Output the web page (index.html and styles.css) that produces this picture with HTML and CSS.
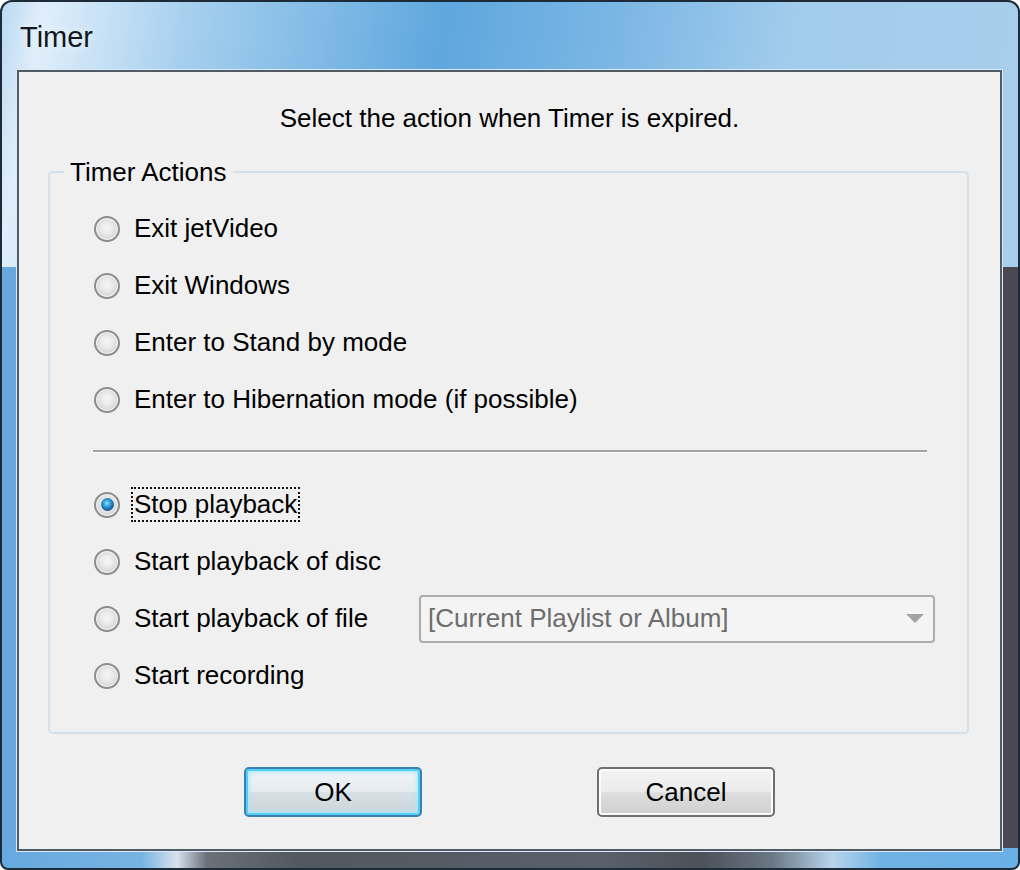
FILE: index.html
```html
<!DOCTYPE html>
<html lang="en">
<head>
  <meta charset="UTF-8">
  <title>Timer</title>
  <link rel="stylesheet" href="styles.css">
</head>
<body>
  <div class="window">
    <div class="titlebar"><span class="title">Timer</span></div>

    <div class="client">
      <p class="prompt">Select the action when Timer is expired.</p>

      <fieldset class="group">
        <legend>Timer Actions</legend>

        <div class="options first">
          <label class="option"><span class="radio"></span><span class="text">Exit jetVideo</span></label>
          <label class="option"><span class="radio"></span><span class="text">Exit Windows</span></label>
          <label class="option"><span class="radio"></span><span class="text">Enter to Stand by mode</span></label>
          <label class="option"><span class="radio"></span><span class="text">Enter to Hibernation mode (if possible)</span></label>
        </div>

        <div class="separator"></div>

        <div class="options">
          <label class="option"><span class="radio checked"></span><span class="text focused">Stop playback</span></label>
          <label class="option"><span class="radio"></span><span class="text">Start playback of disc</span></label>
          <div class="option">
            <span class="radio"></span><span class="text">Start playback of file</span>
            <div class="combo">
              <span class="combo-value">[Current Playlist or Album]</span>
              <span class="combo-arrow"></span>
            </div>
          </div>
          <label class="option"><span class="radio"></span><span class="text">Start recording</span></label>
        </div>
      </fieldset>

      <div class="buttons">
        <button class="btn default">OK</button>
        <button class="btn">Cancel</button>
      </div>
    </div>
  </div>
</body>
</html>
```

FILE: styles.css
```css
body {
  margin: 0;
  background: #fff;
  font-family: "Liberation Sans", Arial, sans-serif;
  color: #000;
}

.window {
  width: 1020px;
  height: 870px;
  box-sizing: border-box;
  border: 2px solid #1d2a37;
  border-radius: 12px 12px 8px 8px;
  display: flex;
  flex-direction: column;
  background:
    linear-gradient(90deg, #66a8e0 0, #78b4e2 140px, #d6e2ee 175px, #6b7079 205px, #52585f 300px, #59606a 600px, #4d5159 700px, #6a7785 770px, #b8d4ec 830px, #6fb2e6 880px, #6ab0e6 100%) left bottom / 100% 20px no-repeat,
    linear-gradient(100deg, #b9d9f1 0, #e0eefa 4%, #a5cfee 18%, #5fa7de 42%, #7ab6e4 58%, #a2ccec 75%, #a8cfec 100%) left top / 100% 265px no-repeat,
    linear-gradient(90deg, #68a8de 50%, #4a4850 50%);
}

.titlebar {
  height: 68px;
  box-sizing: border-box;
  padding: 18px 0 0 18px;
  flex-shrink: 0;
}

.title {
  font-size: 29px;
  line-height: 34px;
  color: #101820;
  text-shadow: 0 0 10px rgba(255, 255, 255, 0.8);
}

.client {
  flex: 1;
  margin: 0 16px 17px 15px;
  border: 2px solid #4f5b66;
  box-shadow: 0 0 0 1px #dce9f4;
  background: #f0f0f0;
  font-size: 26px;
}

.prompt {
  margin: 0;
  padding-top: 31px;
  line-height: 30px;
  text-align: center;
}

.group {
  margin: 24px 31px 0 29px;
  padding: 0 0 28px 0;
  border: 2px solid #d5dfe7;
  border-radius: 5px;
  min-width: 0;
}

.group legend {
  margin-left: 14px;
  padding: 0 6px;
  line-height: 30px;
}

.options.first {
  padding-top: 13px;
}

.option {
  display: flex;
  align-items: center;
  height: 57px;
  padding: 0 32px 0 44px;
}

.radio {
  width: 26px;
  height: 26px;
  box-sizing: border-box;
  border-radius: 50%;
  border: 2px solid #8c8d8e;
  background: radial-gradient(circle at 50% 45%, #f6f6f6 0, #eaeaea 35%, #cfcfcf 80%);
  box-shadow: inset 0 0 0 1px #f4f4f4;
  margin-right: 11px;
  flex-shrink: 0;
  display: flex;
  align-items: center;
  justify-content: center;
}

.radio.checked::after {
  content: "";
  width: 13px;
  height: 13px;
  border-radius: 50%;
  background: radial-gradient(circle at 45% 40%, #9be2ff 0, #34a3e0 30%, #15609a 65%, #0d3d66 100%);
}

.text {
  border: 2px dotted transparent;
  padding: 0 1px;
  line-height: 31px;
  white-space: nowrap;
}

.text.focused {
  border-color: #111;
}

.separator {
  margin: 22px 40px 24px 43px;
  border-top: 2px solid #a2a2a2;
  box-shadow: 0 1px 0 #fff;
}

.combo {
  margin-left: auto;
  width: 516px;
  height: 48px;
  box-sizing: border-box;
  border: 2px solid #adadad;
  border-radius: 4px;
  background: #f4f4f4;
  display: flex;
  align-items: center;
  padding: 0 9px 0 7px;
  color: #6d6d6d;
}

.combo-value {
  flex: 1;
  white-space: nowrap;
}

.combo-arrow {
  width: 0;
  height: 0;
  border-left: 9px solid transparent;
  border-right: 9px solid transparent;
  border-top: 9px solid #a3a3a3;
}

.buttons {
  display: flex;
  justify-content: center;
  gap: 175px;
  margin-top: 33px;
}

.btn {
  width: 178px;
  height: 50px;
  border: 2px solid #707070;
  border-radius: 5px;
  background: linear-gradient(#f3f3f3 0, #ececec 48%, #dddddd 52%, #d0d0d0 100%);
  box-shadow: inset 0 0 0 2px #fbfbfb;
  font-family: inherit;
  font-size: 26px;
  color: #000;
  padding: 0;
}

.btn.default {
  border-color: #3c7fb1;
  box-shadow: inset 0 0 0 2px #4fd0f6, inset 0 0 4px 3px #a8e6fa;
  background: linear-gradient(#eef3f6 0, #e6edf1 48%, #d6dfe4 52%, #cbd5da 100%);
}
```
